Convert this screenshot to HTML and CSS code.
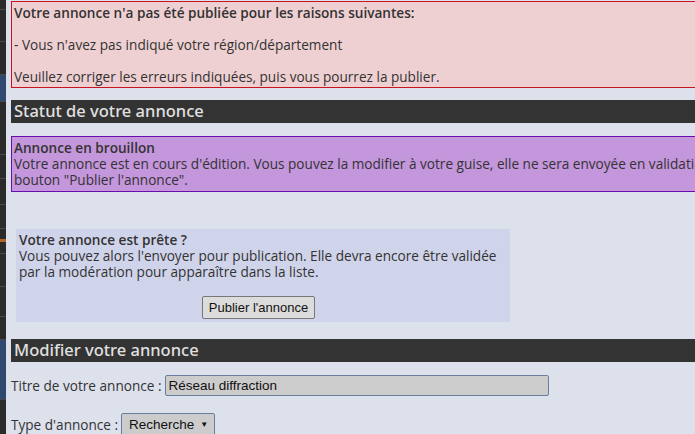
FILE: index.html
```html
<!DOCTYPE html>
<html lang="fr">
<head>
<meta charset="utf-8">
<link rel="stylesheet" href="styles.css">
</head>
<body>
<div class="page">
  <aside class="sidebar">
    <div class="seg h10"></div>
    <div class="seg h32"></div>
    <div class="seg h33"></div>
    <div class="seg blue h27"></div>
    <div class="seg h53"></div>
    <div class="seg h24"></div>
    <div class="seg h26"></div>
    <div class="seg h24"></div>
    <div class="seg h25 orange"></div>
    <div class="seg h33"></div>
    <div class="seg h30"></div>
    <div class="seg h23"></div>
    <div class="seg blue h60"></div>
  </aside>
  <main class="content">
    <div class="error-box">
      <p class="strong">Votre annonce n'a pas été publiée pour les raisons suivantes:</p>
      <p>- Vous n'avez pas indiqué votre région/département</p>
      <p>Veuillez corriger les erreurs indiquées, puis vous pourrez la publier.</p>
    </div>

    <h2 class="section-title">Statut de votre annonce</h2>

    <div class="draft-box">
      <div class="strong">Annonce en brouillon</div>
      <div>Votre annonce est en cours d'édition. Vous pouvez la modifier à votre guise, elle ne sera envoyée en validation qu'après avoir cliqué sur le<br>bouton "Publier l'annonce".</div>
    </div>

    <div class="ready-box">
      <div class="strong">Votre annonce est prête ?</div>
      <div>Vous pouvez alors l'envoyer pour publication. Elle devra encore être validée par la modération pour apparaître dans la liste.</div>
      <div class="ready-actions">
        <button class="btn" type="button">Publier l'annonce</button>
      </div>
    </div>

    <h2 class="section-title second">Modifier votre annonce</h2>

    <div class="form-row">
      <label class="label" for="titre">Titre de votre annonce :</label>
      <input class="text-input" id="titre" type="text" value="Réseau diffraction">
    </div>
    <div class="form-row type-row">
      <label class="label" for="type">Type d'annonce :</label>
      <span class="select"><span class="select-text">Recherche</span><span class="select-arrow">▼</span></span>
    </div>
  </main>
</div>
</body>
</html>
```

FILE: styles.css
```css
html, body {
  margin: 0;
  padding: 0;
  overflow: hidden;
}
body {
  background: #dde1ec;
  font-family: "Open Sans", "Noto Sans", sans-serif;
  font-size: 13.6px;
  line-height: 16px;
  color: #333;
}
.page {
  display: flex;
  width: 1100px;
  min-height: 434px;
}
.sidebar {
  width: 6px;
  flex: 0 0 6px;
  background: #2b2b2b;
  display: flex;
  flex-direction: column;
}
.seg {
  border-bottom: 1px solid #4a4a4a;
  box-sizing: border-box;
}
.seg.blue { background: #2f4a6e; }
.seg.orange { background: linear-gradient(#2b2b2b 40%, #b0642a 40%, #b0642a 55%, #2b2b2b 55%); }
.h10 { height: 10px; }
.h23 { height: 23px; }
.h24 { height: 24px; }
.h25 { height: 25px; }
.h26 { height: 26px; }
.h27 { height: 27px; }
.h30 { height: 30px; }
.h32 { height: 32px; }
.h33 { height: 33px; }
.h53 { height: 53px; }
.h60 { height: 60px; }

.content {
  flex: 1;
  padding-left: 5px;
  padding-top: 1px;
}
.strong { font-weight: 600; }

.error-box {
  background: #efd0d2;
  border: 1px solid #c8141e;
  padding: 3px 2px 2px;
}
.error-box p {
  margin: 16px 0;
}
.error-box p:first-child { margin-top: 0; }
.error-box p:last-child { margin-bottom: 0; }

.section-title {
  margin: 12px 0 0;
  background: #333;
  color: #e0e0e0;
  font-family: "Noto Sans", sans-serif;
  font-weight: 500;
  font-size: 16.5px;
  line-height: 22px;
  height: 23px;
  padding-left: 3px;
}
.section-title.second { margin-top: 17px; }

.draft-box {
  margin-top: 13px;
  background: #c496dc;
  border: 1px solid #6a0dad;
  padding: 3px 2px 3px;
}

.ready-box {
  margin: 37px 0 0 5px;
  width: 488px;
  background: #d0d4ea;
  padding: 3px 3px 3px;
}
.ready-actions {
  display: flex;
  justify-content: center;
  margin-top: 16px;
  padding-right: 9px;
}
.btn {
  font-family: "Liberation Sans", Arial, sans-serif;
  font-size: 13px;
  height: 23px;
  padding: 0 6px;
  background: #dcdcdc;
  border: 1px solid #777;
  border-radius: 2px;
  color: #111;
}

.form-row {
  display: flex;
  align-items: center;
  margin-top: 13px;
}
.label {
  margin-right: 3px;
}
.text-input {
  box-sizing: border-box;
  width: 384px;
  height: 21px;
  background: #cccccc;
  border: 1px solid #6a7fa0;
  border-radius: 2px;
  padding: 0 3px;
  font-family: "Liberation Sans", Arial, sans-serif;
  font-size: 13.5px;
  color: #111;
}
.type-row { margin-top: 17px; }
.select {
  display: inline-flex;
  align-items: center;
  box-sizing: border-box;
  width: 94px;
  height: 24px;
  background: #cccccc;
  border: 1px solid #6a7fa0;
  border-radius: 2px;
  padding: 0 6px 0 7px;
  font-family: "Liberation Sans", Arial, sans-serif;
  font-size: 13.5px;
  color: #111;
  justify-content: space-between;
}
.select-arrow {
  font-size: 8px;
}
```
